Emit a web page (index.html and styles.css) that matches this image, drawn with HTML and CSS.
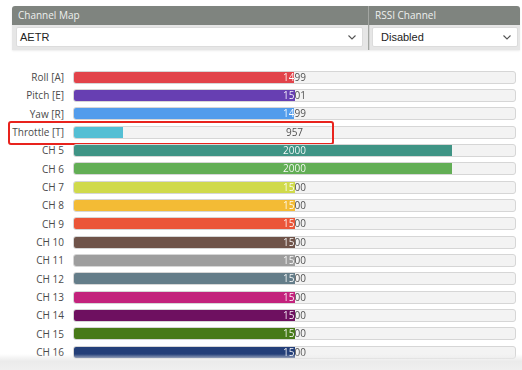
FILE: index.html
```html
<!DOCTYPE html>
<html lang="en">
<head>
    <meta charset="UTF-8">
    <title>Receiver</title>
    <link rel="stylesheet" href="styles.css">
</head>
<body>
    <div class="tab">
        <div class="config">
            <div class="box">
                <div class="box-title">Channel Map</div>
                <div class="box-body">
                    <div class="dropdown"><span>AETR</span><svg class="chev" width="8" height="5" viewBox="0 0 8 5"><path d="M0.5 0.5 L4 4 L7.5 0.5" fill="none" stroke="#555" stroke-width="1.1"/></svg></div>
                </div>
            </div>
            <div class="box">
                <div class="box-title">RSSI Channel</div>
                <div class="box-body">
                    <div class="dropdown"><span>Disabled</span><svg class="chev" width="8" height="5" viewBox="0 0 8 5"><path d="M0.5 0.5 L4 4 L7.5 0.5" fill="none" stroke="#555" stroke-width="1.1"/></svg></div>
                </div>
            </div>
        </div>

        <div class="bars">
            <div class="row"><div class="name">Roll [A]</div><div class="meter" style="--v: 49.93%"><div class="fill ch0"></div><div class="label">1499</div></div></div>
            <div class="row"><div class="name">Pitch [E]</div><div class="meter" style="--v: 50.07%"><div class="fill ch1"></div><div class="label">1501</div></div></div>
            <div class="row"><div class="name">Yaw [R]</div><div class="meter" style="--v: 49.93%"><div class="fill ch2"></div><div class="label">1499</div></div></div>
            <div class="row highlight"><div class="name">Throttle [T]</div><div class="meter" style="--v: 11.21%"><div class="fill ch3"></div><div class="label">957</div></div></div>
            <div class="row"><div class="name">CH 5</div><div class="meter" style="--v: 85.71%"><div class="fill ch4"></div><div class="label">2000</div></div></div>
            <div class="row"><div class="name">CH 6</div><div class="meter" style="--v: 85.71%"><div class="fill ch5"></div><div class="label">2000</div></div></div>
            <div class="row"><div class="name">CH 7</div><div class="meter" style="--v: 50%"><div class="fill ch6"></div><div class="label">1500</div></div></div>
            <div class="row"><div class="name">CH 8</div><div class="meter" style="--v: 50%"><div class="fill ch7"></div><div class="label">1500</div></div></div>
            <div class="row"><div class="name">CH 9</div><div class="meter" style="--v: 50%"><div class="fill ch8"></div><div class="label">1500</div></div></div>
            <div class="row"><div class="name">CH 10</div><div class="meter" style="--v: 50%"><div class="fill ch9"></div><div class="label">1500</div></div></div>
            <div class="row"><div class="name">CH 11</div><div class="meter" style="--v: 50%"><div class="fill ch10"></div><div class="label">1500</div></div></div>
            <div class="row"><div class="name">CH 12</div><div class="meter" style="--v: 50%"><div class="fill ch11"></div><div class="label">1500</div></div></div>
            <div class="row"><div class="name">CH 13</div><div class="meter" style="--v: 50%"><div class="fill ch12"></div><div class="label">1500</div></div></div>
            <div class="row"><div class="name">CH 14</div><div class="meter" style="--v: 50%"><div class="fill ch13"></div><div class="label">1500</div></div></div>
            <div class="row"><div class="name">CH 15</div><div class="meter" style="--v: 50%"><div class="fill ch14"></div><div class="label">1500</div></div></div>
            <div class="row"><div class="name">CH 16</div><div class="meter" style="--v: 50%"><div class="fill ch15"></div><div class="label">1500</div></div></div>
        </div>
    </div>
    <div class="toolbar"></div>
</body>
</html>
```

FILE: styles.css
```css
* { margin: 0; padding: 0; box-sizing: border-box; }
body {
    font-family: "Open Sans", Arial, sans-serif;
    background: #fff;
    width: 522px;
    height: 370px;
    overflow: hidden;
    position: relative;
}
.tab { padding: 6px 2px 0 12px; }

/* top boxes */
.config {
    display: grid;
    grid-template-columns: 356px 152px;
    border-radius: 3px 3px 0 0;
    overflow: hidden;
    box-shadow: 0 1px 2px rgba(0,0,0,0.08);
}
.box + .box { border-left: 1px solid #a3a6a2; }
.box-title {
    height: 19px;
    line-height: 19px;
    background: #7f847f;
    color: #eef0ee;
    font-size: 10px;
    padding-left: 6px;
}
.box-body {
    background: #e6e6e6;
    padding: 2px 5px 3px 4px;
}
.box + .box .box-body { padding: 2px 2px 3px 3px; box-shadow: inset 1px 0 0 #d2d2d2; }
.dropdown {
    height: 20px;
    background: #fff;
    border: 1px solid #dcdcdc;
    border-radius: 2px;
    display: flex;
    align-items: center;
    justify-content: space-between;
    padding: 0 6px 0 3px;
    font-family: "Liberation Sans", Arial, sans-serif;
    font-size: 11px;
    color: #222;
}
.box + .box .dropdown { padding-left: 8px; }

/* channel bars */
.bars {
    margin-top: 20px;
    margin-left: -8px;
    display: flex;
    flex-direction: column;
    gap: 5.35px;
}
.row {
    display: grid;
    grid-template-columns: 60px 443px;
    column-gap: 9px;
    align-items: center;
    height: 13px;
    position: relative;
}
.name {
    text-align: right;
    font-size: 10px;
    color: #4a4a4a;
    white-space: nowrap;
}
.meter {
    display: grid;
    height: 13px;
    background: #f3f3f3;
    border: 1px solid #d6d6d6;
    border-radius: 3px;
    overflow: hidden;
}
.meter > .label, .meter > .fill { grid-area: 1 / 1; }
.fill {
    justify-self: start;
    width: var(--v);
    height: 11px;
}
.label {
    text-align: center;
    font-size: 10px;
    line-height: 11px;
    white-space: nowrap;
    color: transparent;
    background: linear-gradient(90deg, #fff var(--v), #4a4a4a var(--v));
    -webkit-background-clip: text;
    background-clip: text;
}

.highlight::after {
    content: '';
    position: absolute;
    left: 4px;
    top: -4px;
    width: 322px;
    height: 20px;
    border: 2px solid #e8231d;
    border-radius: 3px;
}

.ch0 { background: #e2434a; }
.ch1 { background: #673fb2; }
.ch2 { background: #529cec; }
.ch3 { background: #54bfd4; }
.ch4 { background: #3f9485; }
.ch5 { background: #62ae55; }
.ch6 { background: #d0da4b; }
.ch7 { background: #f3bb35; }
.ch8 { background: #eb5538; }
.ch9 { background: #6f5349; }
.ch10 { background: #9e9e9e; }
.ch11 { background: #647d89; }
.ch12 { background: #c3227c; }
.ch13 { background: #6e1060; }
.ch14 { background: #477a18; }
.ch15 { background: #243f79; }

.toolbar {
    position: absolute;
    left: 0;
    right: 0;
    bottom: 0;
    height: 16px;
    background: linear-gradient(rgba(255,255,255,0), #ebebeb 45%, #efefef);
}
```
